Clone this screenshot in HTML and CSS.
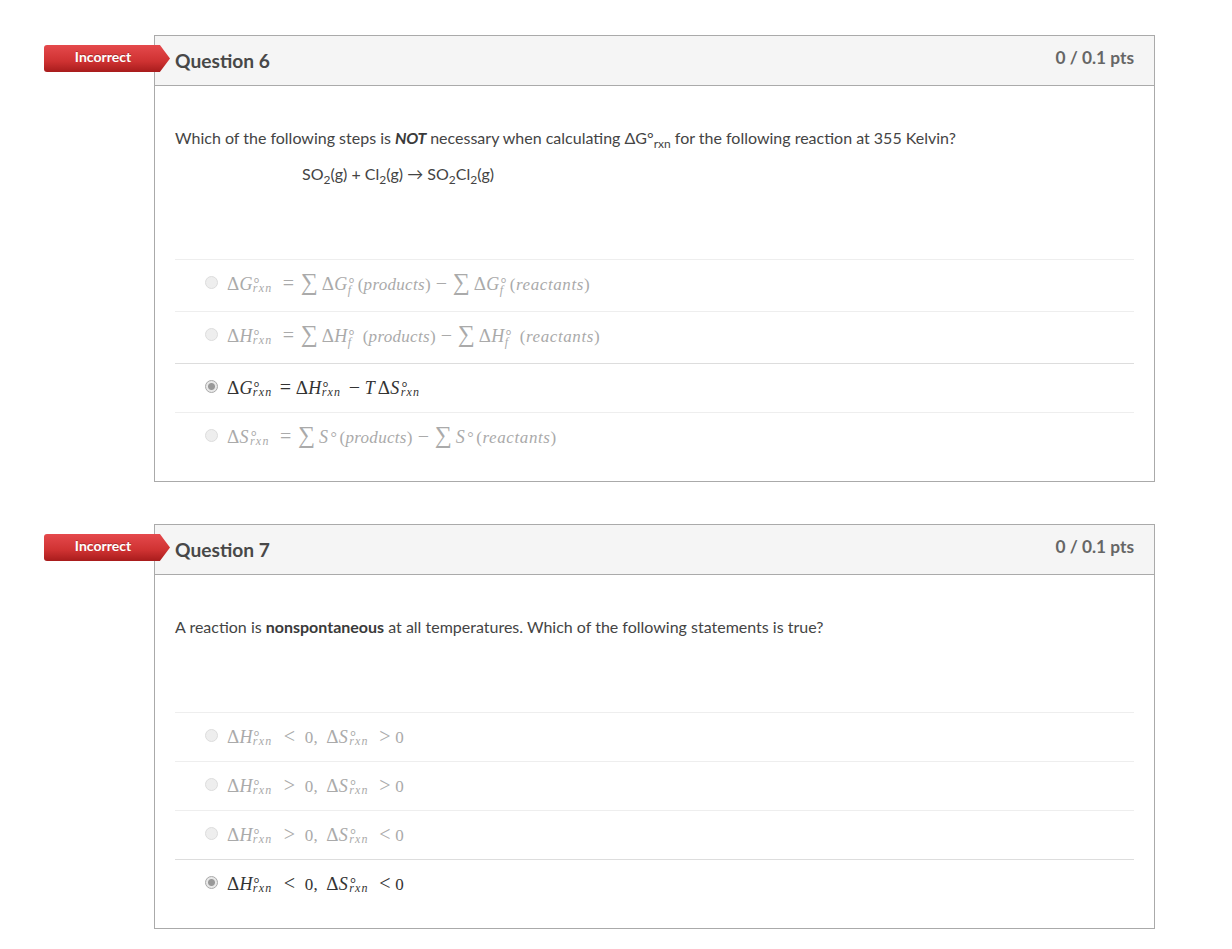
FILE: index.html
```html
<!DOCTYPE html>
<html lang="en">

<head>
  <meta charset="UTF-8">
  <meta name="viewport" content="width=device-width, initial-scale=1.0">
  <title>Quiz Results</title>
  <link rel="stylesheet" href="styles.css">
</head>

<body>
  <div class="quiz">

    <section class="question">
      <div class="badge">Incorrect</div>
      <header class="question-header">
        <h2>Question 6</h2>
        <span class="pts">0 / 0.1 pts</span>
      </header>
      <div class="question-text q6">
        <p>Which of the following steps is <b><i>NOT</i></b> necessary when calculating ΔG°<sub>rxn</sub> for the following reaction at 355 Kelvin?</p>
        <p class="reaction">SO<sub>2</sub>(g) + Cl<sub>2</sub>(g) → SO<sub>2</sub>Cl<sub>2</sub>(g)</p>
      </div>
      <ul class="answers">
        <li class="answer tall">
          <span class="radio"></span>
          <span class="math"><span class="delta">Δ</span><i>G</i><span class="stack"><span>o</span><i>rxn</i></span><span class="eq">=</span><span class="sum">∑</span><span class="delta">Δ</span><i>G</i><span class="stack f"><span>o</span><i>f</i></span><span class="fn">(<i>products</i>)</span><span class="op">−</span><span class="sum">∑</span><span class="delta">Δ</span><i>G</i><span class="stack f"><span>o</span><i>f</i></span><span class="fn long">(<i>reactants</i>)</span></span>
        </li>
        <li class="answer tall">
          <span class="radio"></span>
          <span class="math"><span class="delta">Δ</span><i>H</i><span class="stack"><span>o</span><i>rxn</i></span><span class="eq">=</span><span class="sum">∑</span><span class="delta">Δ</span><i>H</i><span class="stack f h"><span>o</span><i>f</i></span><span class="fn">(<i>products</i>)</span><span class="op">−</span><span class="sum">∑</span><span class="delta">Δ</span><i>H</i><span class="stack f h"><span>o</span><i>f</i></span><span class="fn long">(<i>reactants</i>)</span></span>
        </li>
        <li class="answer selected">
          <span class="radio"></span>
          <span class="math"><span class="delta">Δ</span><i>G</i><span class="stack"><span>o</span><i>rxn</i></span><span class="op tight">=</span><span class="delta">Δ</span><i>H</i><span class="stack"><span>o</span><i>rxn</i></span><span class="op tight">−</span><i class="t">T</i><span class="delta">Δ</span><i class="s">S</i><span class="stack"><span>o</span><i>rxn</i></span></span>
        </li>
        <li class="answer">
          <span class="radio"></span>
          <span class="math"><span class="delta">Δ</span><i class="s">S</i><span class="stack"><span>o</span><i>rxn</i></span><span class="eq">=</span><span class="sum">∑</span><i class="s">S</i><span class="deg">°</span><span class="fn">(<i>products</i>)</span><span class="op">−</span><span class="sum">∑</span><i class="s">S</i><span class="deg">°</span><span class="fn long">(<i>reactants</i>)</span></span>
        </li>
      </ul>
    </section>

    <section class="question">
      <div class="badge">Incorrect</div>
      <header class="question-header">
        <h2>Question 7</h2>
        <span class="pts">0 / 0.1 pts</span>
      </header>
      <div class="question-text q7">
        <p>A reaction is <b>nonspontaneous</b> at all temperatures. Which of the following statements is true?</p>
      </div>
      <ul class="answers">
        <li class="answer">
          <span class="radio"></span>
          <span class="math"><span class="delta">Δ</span><i>H</i><span class="stack"><span>o</span><i>rxn</i></span><span class="rel">&lt;</span><span class="num">0,</span><span class="delta">Δ</span><i class="s">S</i><span class="stack"><span>o</span><i>rxn</i></span><span class="rel last">&gt;</span><span class="num">0</span></span>
        </li>
        <li class="answer">
          <span class="radio"></span>
          <span class="math"><span class="delta">Δ</span><i>H</i><span class="stack"><span>o</span><i>rxn</i></span><span class="rel">&gt;</span><span class="num">0,</span><span class="delta">Δ</span><i class="s">S</i><span class="stack"><span>o</span><i>rxn</i></span><span class="rel last">&gt;</span><span class="num">0</span></span>
        </li>
        <li class="answer">
          <span class="radio"></span>
          <span class="math"><span class="delta">Δ</span><i>H</i><span class="stack"><span>o</span><i>rxn</i></span><span class="rel">&gt;</span><span class="num">0,</span><span class="delta">Δ</span><i class="s">S</i><span class="stack"><span>o</span><i>rxn</i></span><span class="rel last">&lt;</span><span class="num">0</span></span>
        </li>
        <li class="answer selected">
          <span class="radio"></span>
          <span class="math"><span class="delta">Δ</span><i>H</i><span class="stack"><span>o</span><i>rxn</i></span><span class="rel">&lt;</span><span class="num">0,</span><span class="delta">Δ</span><i class="s">S</i><span class="stack"><span>o</span><i>rxn</i></span><span class="rel last">&lt;</span><span class="num">0</span></span>
        </li>
      </ul>
    </section>

  </div>
</body>

</html>
```

FILE: styles.css
```css
* {
  box-sizing: border-box;
}
body {
  margin: 0;
  background-color: #fff;
  font-family: Lato, 'Open Sans', sans-serif;
  color: #444;
}
.quiz {
  width: 1001px;
  margin: 35px 0 0 154px;
}
.question {
  position: relative;
  border: 1px solid #aaa;
  margin-bottom: 42px;
  padding-bottom: 20px;
}
.question-header {
  display: flex;
  justify-content: space-between;
  height: 50px;
  padding: 0 20px;
  background-color: #f5f5f5;
  border-bottom: 1px solid #aaa;
}
.question-header h2 {
  margin: 0;
  padding-top: 13px;
  font-size: 19.2px;
  line-height: 24px;
  font-weight: 700;
  font-variant-ligatures: common-ligatures discretionary-ligatures;
  color: #484848;
}
.pts {
  padding-top: 11px;
  font-size: 17.3px;
  line-height: 22px;
  font-weight: 700;
  color: #666;
}
.badge {
  position: absolute;
  left: -111px;
  top: 9px;
  width: 126px;
  height: 27px;
  padding-right: 8px;
  border-radius: 3px 0 0 3px;
  background-image: linear-gradient(#e5494c 0, #cf3232 60%, #a81c1c 100%);
  clip-path: polygon(0 0, 92% 0, 100% 50%, 92% 100%, 0 100%);
  color: #fff;
  font-size: 14px;
  line-height: 24px;
  font-weight: 700;
  text-align: center;
  text-shadow: 0 -1px 0 rgba(0, 0, 0, 0.25);
}
.question-text {
  padding: 41px 20px 0;
  font-size: 16px;
  line-height: 22px;
}
.question-text p {
  margin: 0;
}
.question-text sub {
  font-size: 12px;
  line-height: 0;
}
.question-text b {
  color: #3a3a3a;
}
.question-text b i {
  letter-spacing: -0.3px;
}
.q6 {
  height: 173px;
}
.q7 {
  height: 137px;
}
.reaction {
  margin-top: 14px !important;
  padding-left: 127px;
}
.answers {
  list-style: none;
  margin: 0 20px;
  padding: 0;
}
.answer {
  display: flex;
  align-items: flex-start;
  height: 49px;
  padding-left: 30px;
  border-top: 1px solid #eee;
  color: #aaa;
}
.answer.tall {
  height: 52px;
}
.answer.selected {
  border-top-color: #ddd;
  color: #333;
}
.radio {
  width: 13px;
  height: 13px;
  margin: 16px 9px 0 0;
  border: 1px solid #ddd;
  border-radius: 50%;
  background-color: #eee;
}
.selected .radio {
  border-color: #aaa;
  background-image: radial-gradient(circle, #999 0, #999 3px, #e8e8e8 4px);
}
.math {
  display: flex;
  align-items: baseline;
  margin-top: 13px;
  font-family: 'Liberation Serif', serif;
  font-size: 16px;
  line-height: 22px;
  letter-spacing: 0.3px;
  white-space: nowrap;
}
.math > i {
  font-size: 18px;
}
.math > i.s {
  width: 10.5px;
}
.math > i.t {
  width: 13px;
}
.delta {
  width: 12.5px;
  font-size: 19px;
}
.stack {
  display: inline-flex;
  flex-direction: column;
  align-items: flex-start;
  width: 21px;
  font-size: 12px;
  line-height: 8px;
  letter-spacing: 1.2px;
  transform: translateY(-7px);
}
.stack > span {
  padding-left: 1px;
  font-family: 'DejaVu Sans', sans-serif;
  font-size: 9px;
}
.stack.f {
  width: 10px;
  line-height: 10px;
}
.stack.f.h {
  width: 15px;
}
.eq {
  width: 11px;
  margin: 0 7px 0 9px;
  font-size: 20px;
  line-height: 0;
}
.sum {
  width: 16px;
  margin-right: 5px;
  font-size: 24px;
  line-height: 0;
}
.fn {
  font-size: 17px;
}
.fn.long {
  letter-spacing: 0.6px;
}
.deg {
  width: 10px;
  padding-left: 1px;
}
.op {
  width: 11px;
  margin: 0 6px 0 5px;
  font-size: 20px;
  line-height: 0;
}
.op.tight {
  margin: 0 5px 0 6px;
}
.rel {
  width: 12px;
  margin: 0 9px 0 10px;
  font-size: 20px;
  line-height: 0;
}
.rel.last {
  margin: 0 4px 0 9px;
}
.num {
  margin-right: 8px;
  font-size: 17px;
}
```
